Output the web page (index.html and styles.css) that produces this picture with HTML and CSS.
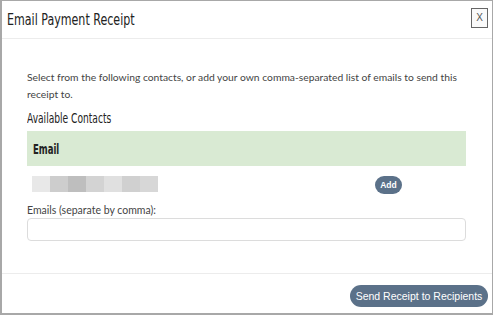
FILE: index.html
```html
<!DOCTYPE html>
<html>
<head>
<meta charset="utf-8">
<link rel="stylesheet" href="styles.css">
</head>
<body>
<div class="modal">
  <div class="modal-header">
    <h1 class="title"><span class="narrow">Email Payment Receipt</span></h1>
    <button class="close">X</button>
  </div>
  <div class="modal-body">
    <p class="intro">Select from the following contacts, or add your own comma-separated list of emails to send this receipt to.</p>
    <h2 class="section"><span class="narrow">Available Contacts</span></h2>
    <div class="table">
      <div class="thead"><span class="narrow bold">Email</span></div>
      <div class="row">
        <div class="blur">
          <span class="b1"></span><span class="b2"></span><span class="b3"></span><span class="b4"></span><span class="b5"></span><span class="b6"></span><span class="b7"></span>
        </div>
        <div class="action"><button class="add">Add</button></div>
      </div>
    </div>
    <label class="label">Emails (separate by comma):</label>
    <div class="input"></div>
  </div>
  <div class="modal-footer">
    <button class="send">Send Receipt to Recipients</button>
  </div>
</div>
</body>
</html>
```

FILE: styles.css
```css
html, body {
  margin: 0;
  padding: 0;
  background: #fff;
}
.modal {
  width: 493px;
  height: 315px;
  box-sizing: border-box;
  border: 1px solid #a8a8a8;
  border-left-width: 2px;
  border-bottom-width: 2px;
  background: #fff;
  display: flex;
  flex-direction: column;
  font-family: "Lato", "Open Sans", sans-serif;
  color: #333;
}
.narrow {
  display: inline-block;
  font-family: "DejaVu Sans Condensed", "DejaVu Sans", sans-serif;
  transform-origin: left center;
  white-space: nowrap;
}
.modal-header {
  height: 38px;
  box-sizing: border-box;
  border-bottom: 1px solid #ececec;
  display: flex;
  align-items: center;
  justify-content: space-between;
  padding: 0 4px 0 5px;
}
.title {
  margin: 0;
  font-weight: normal;
  font-size: 16px;
  line-height: 20px;
  color: #222;
}
.title .narrow {
  transform: scaleX(0.77);
}
.close {
  width: 17px;
  height: 20px;
  margin-top: -3px;
  padding: 0;
  border: 1px solid #666;
  background: #fafafa;
  font-family: "Liberation Sans", sans-serif;
  font-size: 10px;
  color: #555;
  line-height: 18px;
}
.modal-body {
  flex: 1;
  padding: 30px 26px 0 25px;
}
.intro {
  margin: 0;
  font-size: 10.3px;
  line-height: 17px;
  color: #444;
}
.section {
  margin: 5px 0 0;
  font-weight: normal;
  font-size: 13.5px;
  line-height: 20px;
  color: #222;
}
.section .narrow {
  transform: scaleX(0.75);
}
.table {
  margin-top: 3px;
}
.thead {
  height: 35px;
  background: #d9ead3;
  display: flex;
  align-items: center;
  padding-left: 6px;
  font-size: 13.5px;
  color: #222;
}
.thead .narrow {
  font-weight: bold;
  transform: scaleX(0.7);
}
.row {
  display: grid;
  grid-template-columns: 348px 1fr;
  align-items: center;
  height: 34px;
}
.blur {
  display: flex;
  padding-left: 5px;
  height: 16px;
  margin-top: 2px;
}
.blur span {
  width: 18px;
  height: 16px;
}
.blur .b1 { background: #e8e8e8; }
.blur .b2 { background: #cdcdcd; }
.blur .b3 { background: #bebebe; }
.blur .b4 { background: #d3d3d3; }
.blur .b5 { background: #e0e0e0; }
.blur .b6 { background: #d0d0d0; }
.blur .b7 { background: #d7d7d7; }
.add {
  width: 27px;
  height: 18px;
  padding: 0;
  border: none;
  border-radius: 9px;
  background: #5b7189;
  color: #fff;
  font-family: "Liberation Sans", sans-serif;
  font-weight: bold;
  font-size: 8.5px;
  margin-top: -1px;
}
.label {
  display: block;
  margin-top: 2px;
  font-size: 10.5px;
  line-height: 16px;
  color: #444;
}
.input {
  height: 23px;
  box-sizing: border-box;
  border: 1px solid #dcdcdc;
  border-radius: 4px;
  margin-top: 0;
}
.modal-footer {
  border-top: 1px solid #ececec;
  display: flex;
  align-items: flex-start;
  justify-content: flex-end;
  padding: 11px 4px 0 0;
  box-sizing: border-box;
  height: 40px;
}
.send {
  height: 22px;
  width: 138px;
  padding: 0;
  border: none;
  border-radius: 11px;
  background: #5b7189;
  color: #fff;
  font-family: "Liberation Sans", sans-serif;
  font-size: 10.5px;
}
```
